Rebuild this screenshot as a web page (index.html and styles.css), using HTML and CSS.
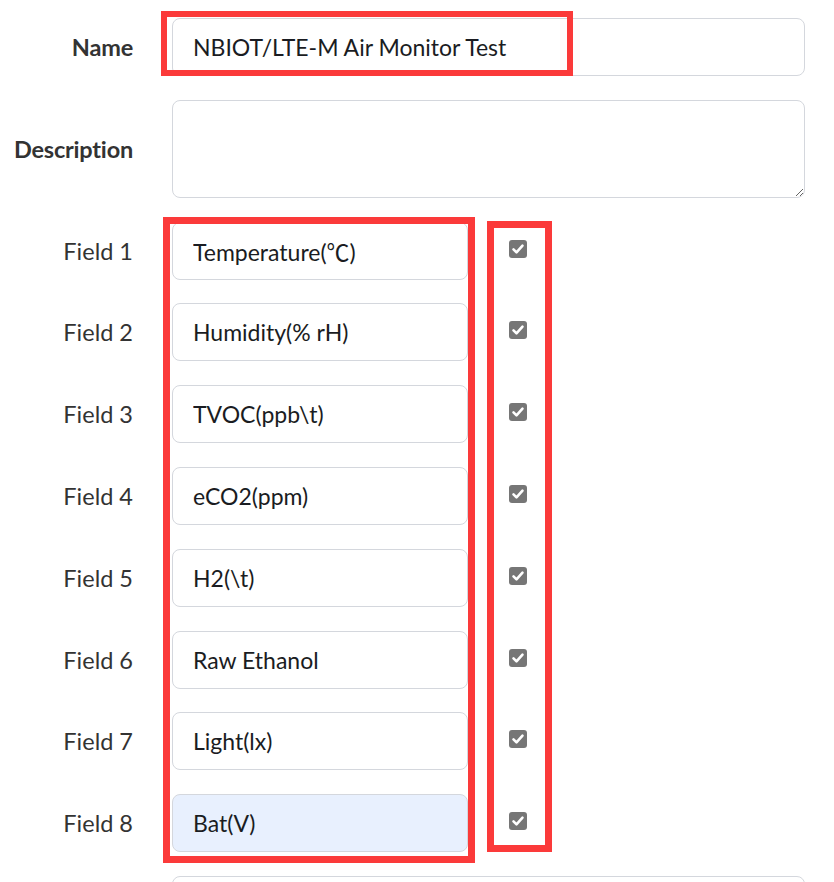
FILE: index.html
```html
<!DOCTYPE html>
<html>
<head>
    <meta charset="utf-8">
    <link rel="stylesheet" href="styles.css">
</head>
<body>
    <form class="channel-form">
        <div class="form-row">
            <label class="form-label strong" for="name">Name</label>
            <div class="field-wrap mark-name">
                <input type="text" id="name" class="form-input" value="NBIOT/LTE-M Air Monitor Test">
            </div>
        </div>

        <div class="form-row">
            <label class="form-label strong" for="desc">Description</label>
            <textarea id="desc" class="form-input form-textarea"></textarea>
        </div>

        <div class="fields">
            <div class="mark mark-fields"></div>
            <div class="mark mark-checks"></div>

            <div class="form-row field-row">
                <label class="form-label">Field 1</label>
                <input type="text" class="form-input field-input" value="Temperature(℃)">
                <span class="check"><svg viewBox="0 0 18 18"><path d="M4.5 9.3l3 3 6-6.6"/></svg></span>
            </div>
            <div class="form-row field-row">
                <label class="form-label">Field 2</label>
                <input type="text" class="form-input field-input" value="Humidity(% rH)">
                <span class="check"><svg viewBox="0 0 18 18"><path d="M4.5 9.3l3 3 6-6.6"/></svg></span>
            </div>
            <div class="form-row field-row">
                <label class="form-label">Field 3</label>
                <input type="text" class="form-input field-input" value="TVOC(ppb\t)">
                <span class="check"><svg viewBox="0 0 18 18"><path d="M4.5 9.3l3 3 6-6.6"/></svg></span>
            </div>
            <div class="form-row field-row">
                <label class="form-label">Field 4</label>
                <input type="text" class="form-input field-input" value="eCO2(ppm)">
                <span class="check"><svg viewBox="0 0 18 18"><path d="M4.5 9.3l3 3 6-6.6"/></svg></span>
            </div>
            <div class="form-row field-row">
                <label class="form-label">Field 5</label>
                <input type="text" class="form-input field-input" value="H2(\t)">
                <span class="check"><svg viewBox="0 0 18 18"><path d="M4.5 9.3l3 3 6-6.6"/></svg></span>
            </div>
            <div class="form-row field-row">
                <label class="form-label">Field 6</label>
                <input type="text" class="form-input field-input" value="Raw Ethanol">
                <span class="check"><svg viewBox="0 0 18 18"><path d="M4.5 9.3l3 3 6-6.6"/></svg></span>
            </div>
            <div class="form-row field-row">
                <label class="form-label">Field 7</label>
                <input type="text" class="form-input field-input" value="Light(lx)">
                <span class="check"><svg viewBox="0 0 18 18"><path d="M4.5 9.3l3 3 6-6.6"/></svg></span>
            </div>
            <div class="form-row field-row">
                <label class="form-label">Field 8</label>
                <input type="text" class="form-input field-input autofill" value="Bat(V)">
                <span class="check"><svg viewBox="0 0 18 18"><path d="M4.5 9.3l3 3 6-6.6"/></svg></span>
            </div>
        </div>

        <div class="form-row">
            <span class="form-label"></span>
            <input type="text" class="form-input">
        </div>
    </form>
</body>
</html>
```

FILE: styles.css
```css
body {
    margin: 0;
    background: #fff;
    font-family: 'Lato', 'Noto Sans CJK SC', sans-serif;
    font-size: 23.5px;
    color: #333;
    overflow: hidden;
}

.channel-form {
    display: flex;
    flex-direction: column;
    gap: 23.8px;
    padding: 18px 29px 0 0;
}

.form-row {
    display: grid;
    grid-template-columns: 133px 1fr;
    column-gap: 39px;
    align-items: center;
}

.form-label {
    text-align: right;
    color: #333;
    white-space: nowrap;
}

.form-label.strong {
    font-weight: 700;
    letter-spacing: -0.2px;
}

.form-input {
    box-sizing: border-box;
    width: 100%;
    height: 58px;
    padding: 0 20px;
    border: 1px solid #d4d7dd;
    border-radius: 8px;
    background: #fff;
    font-family: inherit;
    font-size: 23px;
    color: #1a1c22;
    outline: none;
}

.form-textarea {
    height: 98px;
    padding: 10px 20px;
    resize: vertical;
}

.field-wrap {
    position: relative;
}

/* red annotation frames */
.mark-name::after {
    content: "";
    position: absolute;
    left: -11px;
    top: -7px;
    width: 412px;
    height: 65px;
    box-sizing: border-box;
    border: 6px solid #fb3a3a;
    pointer-events: none;
}

.fields {
    position: relative;
    display: flex;
    flex-direction: column;
    gap: 23.8px;
}

.mark {
    position: absolute;
    box-sizing: border-box;
    border: 7px solid #fb3a3a;
    pointer-events: none;
    z-index: 2;
}

.mark-fields {
    left: 163px;
    top: -5px;
    width: 312px;
    height: 646px;
}

.mark-checks {
    left: 487px;
    top: -1px;
    width: 65px;
    height: 631px;
}

.field-row {
    grid-template-columns: 133px 296px 18px;
    column-gap: 39px;
}

.field-row .check {
    margin-left: 2px;
    margin-top: -4px;
}

.check {
    display: block;
    width: 18px;
    height: 18px;
    border-radius: 3px;
    background: #767676;
}

.check svg {
    display: block;
    width: 18px;
    height: 18px;
    fill: none;
    stroke: #fff;
    stroke-width: 2.6;
    stroke-linecap: round;
    stroke-linejoin: round;
}

.autofill {
    background: #e8f0fe;
}
```
